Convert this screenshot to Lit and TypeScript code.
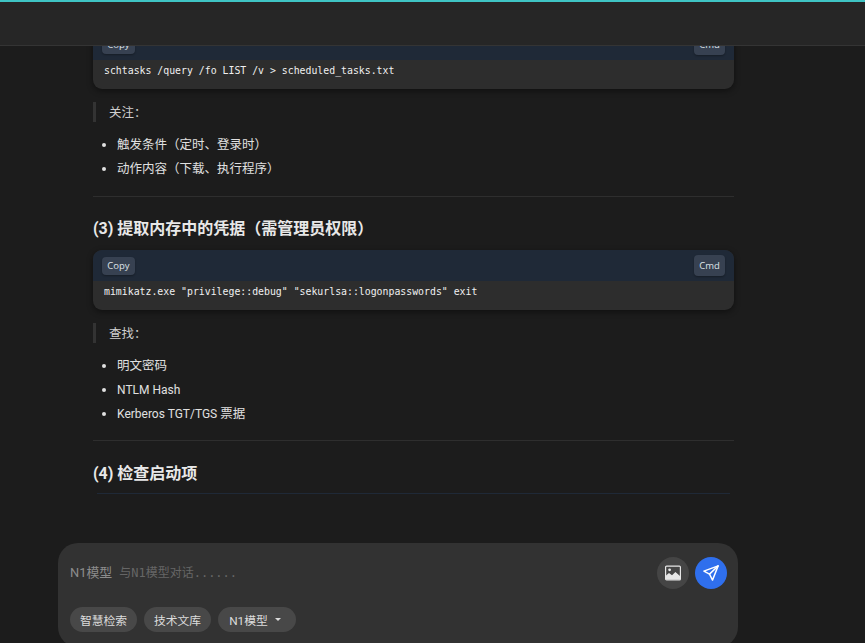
import { LitElement, html, css } from "lit";
import { customElement } from "lit/decorators.js";

@customElement("app-root")
export class AppRoot extends LitElement {
  static styles = css`
    :host {
      display: flex;
      flex-direction: column;
      width: 865px;
      height: 643px;
      overflow: hidden;
      background: #1c1c1c;
      color: #e4e4e4;
      font-family: Roboto, "Noto Sans CJK SC", sans-serif;
    }
    .topbar {
      flex: none;
      height: 43px;
      box-sizing: content-box;
      background: #262626;
      border-top: 2px solid #3fc4c4;
      border-bottom: 1px solid #343434;
    }
    .main {
      flex: 1;
      min-height: 0;
      overflow: hidden;
      padding-left: 93px;
    }
    .content {
      width: 641px;
      margin-top: -17px;
    }
    .code {
      border-radius: 9px;
      overflow: hidden;
      background: #2d2d2d;
      box-shadow: 0 2px 6px rgba(0, 0, 0, 0.45);
    }
    .code-head {
      height: 31px;
      background: #1f2937;
      display: flex;
      align-items: center;
      justify-content: space-between;
      padding: 0 9px;
    }
    .btn {
      display: flex;
      align-items: center;
      justify-content: center;
      background: #374151;
      color: #dfe3e8;
      border-radius: 4px;
      font-family: "Open Sans", sans-serif;
      font-size: 9.5px;
      box-shadow: 0 1px 2px rgba(0, 0, 0, 0.3);
    }
    .copy { width: 33px; height: 18px; }
    .cmd { width: 31px; height: 21px; }
    .code-body {
      height: 29px;
      box-sizing: border-box;
      padding: 3px 11px 0;
      line-height: 16px;
      font-family: "DejaVu Sans Mono", monospace;
      font-size: 9.86px;
      color: #f0f0f0;
      white-space: pre;
    }
    .quote {
      margin-top: 13px;
      height: 20px;
      border-left: 3px solid #333;
      padding-left: 13px;
      font-size: 12.5px;
      line-height: 21px;
      color: #cfcfcf;
    }
    ul {
      margin: 11px 0 0;
      padding: 0 0 0 24px;
      list-style: disc;
      font-size: 12.5px;
      line-height: 24px;
      color: #e0e0e0;
    }
    .latin { font-size: 12px; }
    hr {
      border: 0;
      height: 1px;
      background: #2e2e2e;
      margin: 15px 0 0;
    }
    hr.tight { margin-top: 14px; }
    h3 {
      margin: 20px 0 0;
      font-size: 16px;
      line-height: 23px;
      font-weight: 700;
      color: #e8e8e8;
    }
    h3.late { margin-top: 21px; }
    h3 + .code { margin-top: 10px; }
    .next {
      margin: 8px 4px 0;
      height: 1px;
      background: #1f2937;
    }
    .composer {
      flex: none;
      width: 680px;
      height: 104px;
      margin: 0 0 -4px 58px;
      box-sizing: border-box;
      border-radius: 20px;
      background: #323232;
      padding: 14px 11px 0 12px;
      display: flex;
      flex-direction: column;
    }
    .input {
      display: flex;
      align-items: center;
      height: 32px;
    }
    .model {
      font-size: 12.9px;
      color: #8c8c8c;
      margin: 0 7px 3px 0;
    }
    .ph {
      flex: 1;
      font-family: "DejaVu Sans Mono", "Noto Sans CJK SC", monospace;
      font-size: 12px;
      color: #666;
      margin-bottom: 3px;
    }
    .round {
      width: 32px;
      height: 32px;
      border-radius: 50%;
      display: flex;
      align-items: center;
      justify-content: center;
      background: #454545;
    }
    .send { background: #2f6fed; margin-left: 6px; }
    .chips {
      display: flex;
      gap: 7px;
      margin-top: 18px;
    }
    .chip {
      height: 25px;
      border-radius: 13px;
      background: #484848;
      color: #dcdcdc;
      font-size: 11.8px;
      display: flex;
      align-items: center;
      justify-content: center;
      width: 67px;
    }
    .chip.sel { width: 78px; gap: 7px; padding-right: 4px; box-sizing: border-box; }
    .caret {
      width: 0;
      height: 0;
      border-left: 3px solid transparent;
      border-right: 3px solid transparent;
      border-top: 3px solid #dcdcdc;
    }
  `;

  private code(text: string) {
    return html`<div class="code">
      <div class="code-head">
        <div class="btn copy">Copy</div>
        <div class="btn cmd">Cmd</div>
      </div>
      <div class="code-body">${text}</div>
    </div>`;
  }

  render() {
    return html`
      <div class="topbar"></div>
      <div class="main">
        <div class="content">
          ${this.code("schtasks /query /fo LIST /v > scheduled_tasks.txt")}
          <div class="quote">关注：</div>
          <ul>
            <li>触发条件（定时、登录时）</li>
            <li>动作内容（下载、执行程序）</li>
          </ul>
          <hr />
          <h3>(3) 提取内存中的凭据（需管理员权限）</h3>
          ${this.code('mimikatz.exe "privilege::debug" "sekurlsa::logonpasswords" exit')}
          <div class="quote">查找：</div>
          <ul>
            <li>明文密码</li>
            <li><span class="latin">NTLM Hash</span></li>
            <li><span class="latin">Kerberos TGT/TGS</span> 票据</li>
          </ul>
          <hr class="tight" />
          <h3 class="late">(4) 检查启动项</h3>
          <div class="next"></div>
        </div>
      </div>
      <div class="composer">
        <div class="input">
          <span class="model">N1模型</span>
          <span class="ph">与N1模型对话......</span>
          <div class="round">
            <svg width="16" height="16" viewBox="0 0 16 16">
              <rect x="0.6" y="1.1" width="14.8" height="13.8" rx="1" fill="none" stroke="#e6e6e6" stroke-width="1.2"></rect>
              <circle cx="4.6" cy="4.8" r="1.4" fill="#e6e6e6"></circle>
              <path d="M1 14.5V10.5l3-2.5 3 2.2 3.4-3.2 4.6 4v3.5z" fill="#e6e6e6"></path>
            </svg>
          </div>
          <div class="round send">
            <svg width="18" height="18" viewBox="0 0 24 24" fill="none" stroke="#fff" stroke-width="1.9" stroke-linejoin="round" stroke-linecap="round">
              <path d="M21.5 2.5 2.5 9.5l7.5 4 4 8z"></path>
              <path d="M21.5 2.5 10 13.5"></path>
            </svg>
          </div>
        </div>
        <div class="chips">
          <div class="chip">智慧检索</div>
          <div class="chip">技术文库</div>
          <div class="chip sel">N1模型<span class="caret"></span></div>
        </div>
      </div>
    `;
  }
}
